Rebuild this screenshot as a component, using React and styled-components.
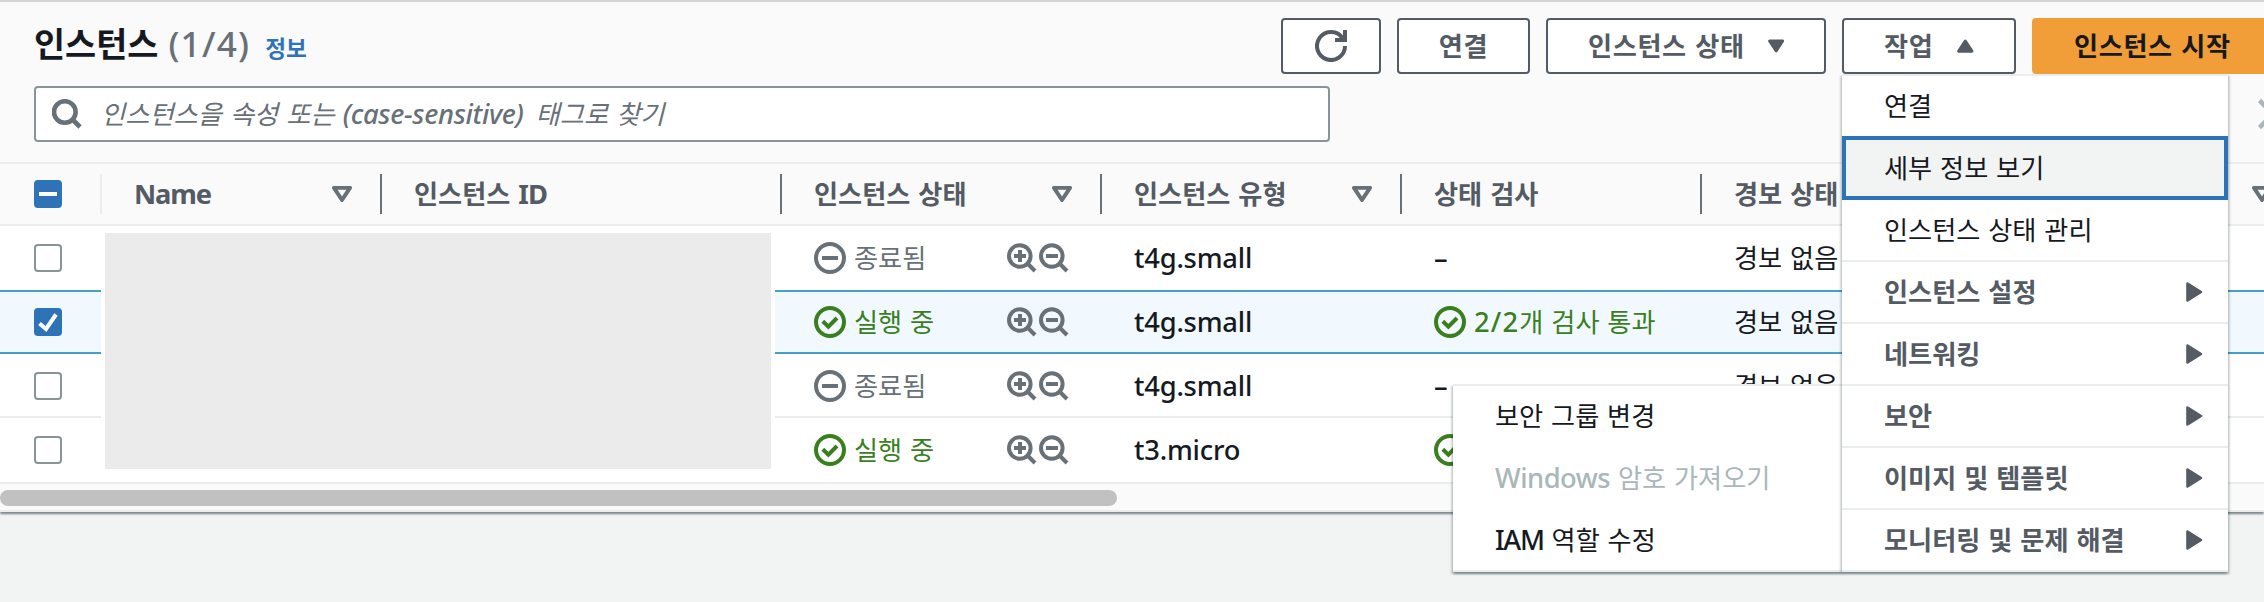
import React from "react";
import styled, { createGlobalStyle, css } from "styled-components";

const c = {
  ink: "#16191f",
  label: "#545b64",
  muted: "#687078",
  blue: "#2e73b8",
  green: "#3a7f1f",
  line: "#eaeded",
  border: "#879596",
  disabled: "#aab7b8",
  head: "#fafafa",
  page: "#f2f3f3",
  pick: "#44a0c6",
};

const Global = createGlobalStyle`
  * { box-sizing: border-box; }
  html, body { margin: 0; height: 100%; overflow: hidden; background: ${c.page}; }
  body {
    font-family: "Noto Sans CJK KR", "Noto Sans", sans-serif;
    font-size: 26.2px;
    line-height: 40px;
    word-spacing: 2px;
    color: ${c.ink};
    white-space: nowrap;
  }
`;

const raised = css`
  box-shadow: 0 2px 2px 0 rgba(0, 28, 36, 0.3), 2px 2px 2px 0 rgba(0, 28, 36, 0.15),
    -2px 2px 2px 0 rgba(0, 28, 36, 0.15);
`;

const Screen = styled.div`
  position: relative;
  width: 2264px;
  height: 602px;
  overflow: hidden;
`;

const Panel = styled.section`
  height: 512px;
  background: ${c.head};
  border-top: 2px solid #d2d6d9;
  border-bottom: 2px solid ${c.line};
  ${raised}
`;

const Text = styled.span`
  display: block;
  padding-bottom: 2px;
`;

const Latin = styled.span`
  margin-right: ${(p) => p.$after || 0}px;
  font-family: "Noto Sans", sans-serif;
  font-size: 1.042em;
  font-weight: ${(p) => p.$weight || 500};
  letter-spacing: ${(p) => p.$track || 0}px;
`;

const TopBar = styled.header`
  display: flex;
  height: 84px;
  padding: 16px 0 0 34px;
`;

const Title = styled.h1`
  flex: 1;
  display: flex;
  align-items: baseline;
  height: 52px;
  margin: 0;
  font-size: 33.8px;
  line-height: 50px;
  font-weight: 700;
`;

const Count = styled.span`
  margin-left: 10px;
  color: ${c.muted};
`;

const InfoLink = styled.a`
  margin-left: 15px;
  font-size: 22.6px;
  color: ${c.blue};
`;

const Actions = styled.div`
  display: flex;
  flex: none;
  gap: 16px;
  width: 983px;
`;

const Button = styled.button`
  flex: none;
  display: flex;
  align-items: center;
  justify-content: ${(p) => (p.$center ? "center" : "flex-start")};
  width: ${(p) => p.$w}px;
  height: 56px;
  padding: 0 ${(p) => (p.$center ? 0 : 40)}px;
  border: 2px solid ${(p) => (p.$primary ? "#f19e38" : c.label)};
  border-radius: 4px;
  background: ${(p) => (p.$primary ? "#f19e38" : "#fff")};
  color: ${(p) => (p.$primary ? c.ink : c.label)};
  font: inherit;
  font-weight: 700;
  letter-spacing: 0.6px;
  word-spacing: 2px;
  white-space: nowrap;
  svg { margin-left: ${(p) => p.$gap || 0}px; }
`;

const FilterBar = styled.div`
  display: flex;
  justify-content: space-between;
  height: 76px;
  padding-left: 34px;
`;

const Search = styled.div`
  display: flex;
  align-items: center;
  width: 1296px;
  height: 56px;
  padding-left: 16px;
  border: 2px solid ${c.border};
  border-radius: 4px;
  background: #fff;
  color: ${c.muted};
`;

const Placeholder = styled(Text)`
  margin-left: 19px;
  font-style: italic;
  letter-spacing: 0.1px;
`;

const Pager = styled.div`
  width: 6px;
  padding-top: 12px;
  overflow: hidden;
`;

const grid = css`
  display: grid;
  grid-template-columns: 102px 280px 400px 320px 300px 300px 300px 300px;
`;

const HeadRow = styled.div`
  ${grid}
  height: 64px;
  align-items: center;
  border-top: 2px solid ${c.line};
  border-bottom: 2px solid ${c.line};
  color: ${c.label};
  font-weight: 700;
`;

const HeadCell = styled.div`
  display: flex;
  align-items: center;
  justify-content: space-between;
  height: 40px;
  padding: 0 28px 0 32px;
  border-right: 2px solid ${c.muted};
`;

const SelectCell = styled.div`
  display: flex;
  align-items: center;
  height: 40px;
  padding-left: 34px;
  ${(p) => p.$head && `border-right: 2px solid ${c.line};`}
`;

const Body = styled.div`
  position: relative;
  background: #fff;
  border-bottom: 2px solid ${c.line};
`;

const Row = styled.div`
  ${grid}
  align-items: center;
  height: 64px;
  background: ${(p) => (p.$on ? "#f2f9fe" : "#fff")};
  box-shadow: ${(p) =>
    p.$on ? `inset 0 2px ${c.pick}, inset 0 -2px ${c.pick}` : p.$line ? `inset 0 -2px ${c.line}` : "none"};
`;

const Cell = styled.div`
  display: flex;
  align-items: center;
  justify-content: space-between;
  padding: 0 33px 0 32px;
`;

const Status = styled.span`
  display: flex;
  align-items: center;
  gap: 8px;
  color: ${(p) => (p.$ok ? c.green : c.muted)};
`;

const Zooms = styled.span`
  display: flex;
  gap: 2px;
  color: ${c.muted};
`;

const Mask = styled.div`
  position: absolute;
  left: 101px;
  top: 0;
  width: 674px;
  height: 256px;
  padding: 7px 4px 13px;
  background: #fff;
  &::before {
    content: "";
    display: block;
    height: 100%;
    background: #ebebeb;
  }
`;

const Box = styled.span`
  display: flex;
  align-items: center;
  justify-content: center;
  width: 28px;
  height: 28px;
  border-radius: 4px;
  border: 2px solid ${(p) => (p.$on ? c.blue : c.border)};
  background: ${(p) => (p.$on ? c.blue : "#fff")};
`;

const ScrollTrack = styled.div`
  padding-top: 6px;
`;

const ScrollThumb = styled.div`
  width: 1117px;
  height: 16px;
  border-radius: 8px;
  background: #c1c1c1;
`;

const menu = css`
  position: absolute;
  background: #fff;
  border-top: 2px solid ${c.line};
  ${raised}
`;

const Menu = styled.div`
  ${menu}
  left: 1842px;
  top: 74px;
  width: 386px;
`;

const SubMenu = styled.div`
  ${menu}
  left: 1453px;
  top: 384px;
  width: 389px;
`;

const Item = styled.div`
  display: flex;
  align-items: center;
  justify-content: space-between;
  height: 62px;
  padding: 0 25px 2px 42px;
  color: ${(p) => (p.$off ? c.disabled : p.$group ? c.label : c.ink)};
  font-weight: ${(p) => (p.$group ? 700 : 400)};
  ${(p) => p.$rule && `border-bottom: 2px solid ${c.line}; padding-bottom: 0;`}
  ${(p) =>
    p.$focus &&
    `height: 64px; margin-top: -2px; padding-left: 38px; padding-bottom: 0; border: 4px solid ${c.blue}; background: ${c.page};`}
`;

const Caret = ({ up, open }) => (
  <svg width="20" height="16" viewBox="0 0 20 16">
    <path
      d={up ? "M2 14.2h16L10 2z" : "M2 1.8h16L10 14z"}
      fill={open ? "none" : "currentColor"}
      stroke={open ? c.muted : "currentColor"}
      strokeWidth={open ? 4 : 3.6}
      strokeLinejoin="round"
    />
  </svg>
);

const Arrow = () => (
  <svg width="17" height="20" viewBox="0 0 17 20">
    <path d="M1.5 1.5v17L15 10z" fill={c.label} stroke={c.label} strokeWidth="2.6" strokeLinejoin="round" />
  </svg>
);

const Refresh = () => (
  <svg width="32" height="32" viewBox="0 0 32 32" fill="none" stroke="currentColor" strokeWidth="4">
    <path d="M30 16A14 14 0 1 1 27.5 8" />
    <path d="M30 0v10H20" />
  </svg>
);

const Magnifier = ({ sign }) => (
  <svg width="30" height="30" viewBox="0 0 30 30" fill="none" stroke="currentColor" strokeWidth={sign ? 4 : 4.6}>
    <circle cx="12.8" cy="13" r="10.8" />
    <path d="M20.5 20.5l7.5 7.5" />
    {sign && <path d={sign === "plus" ? "M7 13h12M13 7v12" : "M7 13h12"} />}
  </svg>
);

const StateIcon = ({ ok }) => (
  <svg width="32" height="32" viewBox="0 0 32 32" fill="none" stroke="currentColor" strokeWidth="4">
    <circle cx="16" cy="16" r="14" />
    <path d={ok ? "M8.8 15.2l5.6 5.4L23 12" : "M8 16h16"} />
  </svg>
);

const Check = () => (
  <svg width="20" height="19" viewBox="0 0 20 19" fill="none" stroke="#fff" strokeWidth="4">
    <path d="M1.5 10.5l6.5 5.5L18 1.5" />
  </svg>
);

const Dash = () => (
  <svg width="18" height="4" viewBox="0 0 18 4">
    <path d="M0 2h18" stroke="#fff" strokeWidth="4" />
  </svg>
);

const Cross = () => (
  <svg width="30" height="32" viewBox="0 0 30 32" fill="none" stroke={c.disabled} strokeWidth="4.6">
    <path d="M1.5 2.5l27 27M28.5 2.5l-27 27" />
  </svg>
);

const rows = [
  { running: false, type: "t4g.small" },
  { running: true, type: "t4g.small", on: true, check: true },
  { running: false, type: "t4g.small", line: true },
  { running: true, type: "t3.micro", check: true },
];

const menuItems = [
  { text: "연결" },
  { text: "세부 정보 보기", focus: true },
  { text: "인스턴스 상태 관리", rule: true },
  { text: "인스턴스 설정", group: true, rule: true },
  { text: "네트워킹", group: true, rule: true },
  { text: "보안", group: true, rule: true },
  { text: "이미지 및 템플릿", group: true, rule: true },
  { text: "모니터링 및 문제 해결", group: true, rule: true },
];

export default function App() {
  return (
    <Screen>
      <Global />
      <Panel>
        <TopBar>
          <Title>
            인스턴스
            <Count><Latin $track={1.2}>(1/4)</Latin></Count>
            <InfoLink>정보</InfoLink>
          </Title>
          <Actions>
            <Button $w={100} $center><Refresh /></Button>
            <Button $w={133} $center><Text>연결</Text></Button>
            <Button $w={280} $gap={23}><Text>인스턴스 상태</Text><Caret /></Button>
            <Button $w={174} $gap={24}><Text>작업</Text><Caret up /></Button>
            <Button $w={240} $primary><Text>인스턴스 시작</Text></Button>
          </Actions>
        </TopBar>
        <FilterBar>
          <Search>
            <Magnifier />
            <Placeholder>
              인스턴스을 속성 또는 <Latin $track={-0.3} $after={4}>(case-sensitive)</Latin> 태그로 찾기
            </Placeholder>
          </Search>
          <Pager><Cross /></Pager>
        </FilterBar>
        <HeadRow>
          <SelectCell $head><Box $on><Dash /></Box></SelectCell>
          <HeadCell><Text><Latin $weight={700} $track={-1.1}>Name</Latin></Text><Caret open /></HeadCell>
          <HeadCell><Text>인스턴스 <Latin $weight={700} $track={-1}>ID</Latin></Text></HeadCell>
          <HeadCell><Text>인스턴스 상태</Text><Caret open /></HeadCell>
          <HeadCell><Text>인스턴스 유형</Text><Caret open /></HeadCell>
          <HeadCell><Text>상태 검사</Text></HeadCell>
          <HeadCell><Text>경보 상태</Text></HeadCell>
          <HeadCell><span /><Caret open /></HeadCell>
        </HeadRow>
        <Body>
          {rows.map((r, i) => (
            <Row key={i} $on={r.on} $line={r.line}>
              <SelectCell><Box $on={r.on}>{r.on && <Check />}</Box></SelectCell>
              <Cell />
              <Cell />
              <Cell>
                <Status $ok={r.running}>
                  <StateIcon ok={r.running} />
                  <Text>{r.running ? "실행 중" : "종료됨"}</Text>
                </Status>
                <Zooms><Magnifier sign="plus" /><Magnifier sign="minus" /></Zooms>
              </Cell>
              <Cell><Text><Latin $track={-0.2}>{r.type}</Latin></Text></Cell>
              <Cell>
                {r.check ? (
                  <Status $ok>
                    <StateIcon ok />
                    <Text><Latin $track={1.2}>2/2</Latin>개 검사 통과</Text>
                  </Status>
                ) : (
                  <Text><Latin>–</Latin></Text>
                )}
              </Cell>
              <Cell><Text>경보 없음</Text></Cell>
            </Row>
          ))}
          <Mask />
        </Body>
        <ScrollTrack><ScrollThumb /></ScrollTrack>
      </Panel>
      <SubMenu>
        <Item><Text>보안 그룹 변경</Text></Item>
        <Item $off><Text><Latin $track={-0.5}>Windows</Latin> 암호 가져오기</Text></Item>
        <Item $rule><Text><Latin $track={-1.3}>IAM</Latin> 역할 수정</Text></Item>
      </SubMenu>
      <Menu>
        {menuItems.map((m) => (
          <Item key={m.text} $group={m.group} $rule={m.rule} $focus={m.focus}>
            <Text>{m.text}</Text>
            {m.group && <Arrow />}
          </Item>
        ))}
      </Menu>
    </Screen>
  );
}
